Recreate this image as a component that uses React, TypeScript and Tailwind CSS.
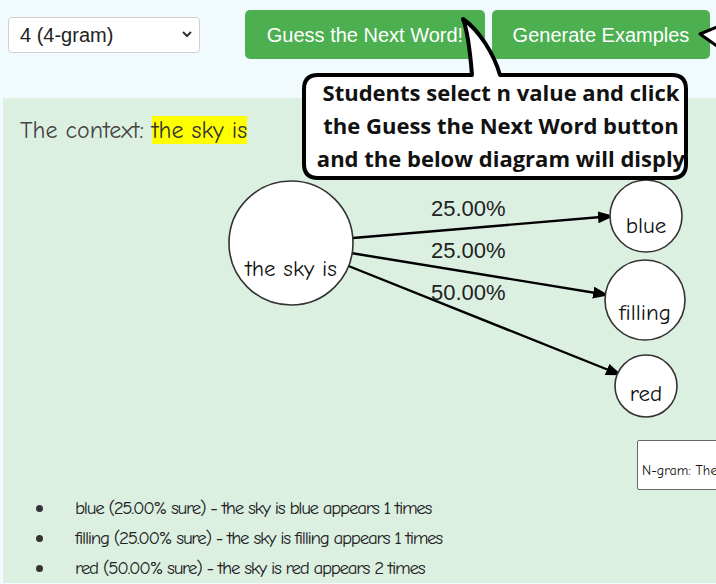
import { useState } from "react";

const comic = "font-['Comic_Sans_MS','Comic_Neue','Open_Sans',sans-serif]";

const predictions = [
  { word: "blue", pct: "25.00", count: 1 },
  { word: "filling", pct: "25.00", count: 1 },
  { word: "red", pct: "50.00", count: 2 },
];

function Diagram() {
  return (
    <svg width="713" height="290" viewBox="0 0 713 290" className="block">
      <defs>
        <marker id="arrow" viewBox="0 0 16 12" refX="15" refY="6" markerWidth="16" markerHeight="12" markerUnits="userSpaceOnUse" orient="auto">
          <path d="M0,0 L16,6 L0,12 Z" fill="#000" />
        </marker>
      </defs>
      <g stroke="#000" strokeWidth="2.4" fill="none">
        <line x1="349" y1="88" x2="609" y2="66" markerEnd="url(#arrow)" />
        <line x1="347" y1="103" x2="604" y2="145" markerEnd="url(#arrow)" />
        <line x1="342" y1="115" x2="617" y2="225" markerEnd="url(#arrow)" />
      </g>
      <g fill="#fff" stroke="#333" strokeWidth="1.6">
        <circle cx="287" cy="93" r="62" />
        <circle cx="642" cy="66" r="36" />
        <circle cx="641" cy="150" r="40" />
        <circle cx="642" cy="236" r="31" />
      </g>
      <g fill="#111" fontSize="23" fontFamily="'Comic Sans MS','Comic Neue','Open Sans',sans-serif" textAnchor="middle">
        <text x="287" y="126">the sky is</text>
        <text x="642" y="83">blue</text>
        <text x="641" y="170">filling</text>
        <text x="642" y="251">red</text>
      </g>
      <g fill="#222" fontSize="22" fontFamily="'Liberation Sans',Arial,sans-serif">
        <text x="427" y="66">25.00%</text>
        <text x="427" y="108">25.00%</text>
        <text x="427" y="150">50.00%</text>
      </g>
    </svg>
  );
}

function Callout() {
  return (
    <div className="pointer-events-none absolute inset-0">
      <svg width="716" height="200" className="absolute left-0 top-0">
        <path
          d="M472,75 C470,50 468,32 463,19 C479,30 494,54 500,75 L672,75 Q686,75 686,89 L686,164 Q686,178 672,178 L318,178 Q304,178 304,164 L304,89 Q304,75 318,75 Z"
          fill="#fff"
          stroke="#000"
          strokeWidth="4"
          strokeLinejoin="round"
        />
        <path d="M717,27 L700,34 Q707,39 717,46" fill="#fff" stroke="#000" strokeWidth="3" strokeLinejoin="round" />
      </svg>
      <div className="absolute left-[312px] top-[76px] flex w-[378px] flex-col items-center font-['Open_Sans',sans-serif] text-[22px] font-bold leading-[33px] text-[#111]">
        <span>Students select n value and click</span>
        <span>the Guess the Next Word button</span>
        <span>and the below diagram will disply</span>
      </div>
    </div>
  );
}

export default function App() {
  const [n, setN] = useState("4");

  return (
    <div className="relative h-[584px] w-[716px] overflow-hidden bg-[#f1fafd]">
      <div className="flex items-center gap-[7px] pl-[8px] pt-[10px] font-['Liberation_Sans',Arial,sans-serif]">
        <div className="relative mr-[38px] h-[36px] w-[192px]">
          <select
            className="h-full w-full appearance-none rounded-[4px] border border-[#cfcfcf] bg-white pl-[11px] text-[20px] text-[#222] outline-none"
            value={n}
            onChange={(event) => setN(event.target.value)}
          >
            <option value="2">2 (bigram)</option>
            <option value="3">3 (trigram)</option>
            <option value="4">4 (4-gram)</option>
          </select>
          <svg className="pointer-events-none absolute right-[8px] top-[14px]" width="10" height="7" viewBox="0 0 10 7">
            <path d="M1,1 L5,5 L9,1" fill="none" stroke="#333" strokeWidth="2" />
          </svg>
        </div>
        <button className="h-[49px] w-[240px] rounded-[5px] bg-[#4caf50] text-[20px] text-white" type="button">
          Guess the Next Word!
        </button>
        <button className="h-[49px] w-[218px] rounded-[5px] bg-[#4caf50] text-[20px] text-white" type="button">
          Generate Examples
        </button>
      </div>

      <div className={`ml-[3px] mt-[39px] w-[760px] border-l border-t border-[#e3eee7] bg-[#dcf0e2] pt-[17px] ${comic}`}>
        <p className="h-[28px] pl-[16px] text-[24px] leading-[28px] text-[#444]">
          The context: <span className="bg-[#ffff00] text-[#333]">the sky is</span>
        </p>
        <div className="mt-[6px]">
          <Diagram />
        </div>
        <div className="ml-[633px] flex h-[50px] w-[120px] items-center whitespace-nowrap rounded-[2px] border border-[#666] bg-white pl-[4px] pt-[10px] text-[14px] text-[#111]">
          N-gram: The sky is
        </div>
        <ul className="pt-[3px] text-[19px] leading-[30px] tracking-[-1.3px] text-[#222]">
          {predictions.map((p) => (
            <li key={p.word} className="flex items-center">
              <span className="ml-[32px] mr-[32px] h-[7px] w-[7px] rounded-full bg-[#333]" />
              {p.word} ({p.pct}% sure) - the sky is {p.word} appears {p.count} times
            </li>
          ))}
        </ul>
      </div>

      <Callout />
    </div>
  );
}
